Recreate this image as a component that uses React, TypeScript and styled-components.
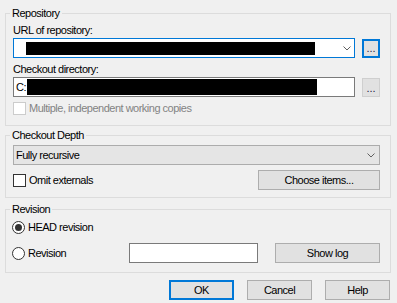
import styled, { createGlobalStyle } from "styled-components";

const GlobalStyle = createGlobalStyle`
  html, body {
    margin: 0;
    background: #f0f0f0;
  }
  body {
    font-family: "Liberation Sans", Arial, sans-serif;
    font-size: 11px;
    letter-spacing: -0.5px;
    color: #000;
  }
`;

const Chevron = () => (
  <svg width="8" height="5" viewBox="0 0 8 5">
    <path d="M0.5 0.5 L4 4 L7.5 0.5" fill="none" stroke="#606060" strokeWidth="1" />
  </svg>
);

const App = () => {
  return (
    <>
      <GlobalStyle />
      <Dialog>
        <Group $pt={4} $pb={10}>
          <Legend>Repository</Legend>
          <Label>URL of repository:</Label>
          <FieldRow>
            <Field $focused>
              <Redacted $left={11} $width={289} $height={13} />
              <ChevronBox $right={3}>
                <Chevron />
              </ChevronBox>
            </Field>
            <BrowseButton $focused>...</BrowseButton>
          </FieldRow>
          <Label $mt={5}>Checkout directory:</Label>
          <FieldRow>
            <Field>
              <FieldText>C:</FieldText>
              <Redacted $left={1} $width={290} $height={16} />
            </Field>
            <BrowseButton>...</BrowseButton>
          </FieldRow>
          <CheckRow $mt={5} $disabled>
            <CheckBox $disabled />
            Multiple, independent working copies
          </CheckRow>
        </Group>

        <Group $mt={3} $pt={3} $pb={7}>
          <Legend>Checkout Depth</Legend>
          <Select>
            Fully recursive
            <ChevronBox $right={4}>
              <Chevron />
            </ChevronBox>
          </Select>
          <OptionRow>
            <CheckRow>
              <CheckBox />
              Omit externals
            </CheckRow>
            <PushButton $w={122}>Choose items...</PushButton>
          </OptionRow>
        </Group>

        <Group $mt={5} $pt={5} $pb={9}>
          <Legend>Revision</Legend>
          <CheckRow>
            <Radio $checked />
            HEAD revision
          </CheckRow>
          <RevisionGrid>
            <CheckRow>
              <Radio />
              Revision
            </CheckRow>
            <TextBox />
            <PushButton>Show log</PushButton>
          </RevisionGrid>
        </Group>

        <ButtonBar>
          <PushButton $w={65} $focused>
            OK
          </PushButton>
          <PushButton $w={65}>Cancel</PushButton>
          <PushButton $w={65}>Help</PushButton>
        </ButtonBar>
      </Dialog>
    </>
  );
};

const Dialog = styled.div`
  width: 397px;
  height: 303px;
  box-sizing: border-box;
  padding: 7px 6px 0 5px;
  display: flex;
  flex-direction: column;
`;

const Group = styled.fieldset<{ $mt?: number; $pt: number; $pb: number }>`
  margin: ${(p) => p.$mt ?? 0}px 0 0;
  padding: ${(p) => p.$pt}px 10px ${(p) => p.$pb}px 7px;
  border: 1px solid #dcdcdc;
  min-inline-size: 0;
  display: flex;
  flex-direction: column;
`;

const Legend = styled.legend`
  padding: 0 2px;
  margin-left: -3px;
  line-height: 13px;
`;

const Label = styled.div<{ $mt?: number }>`
  line-height: 13px;
  margin-top: ${(p) => p.$mt ?? 0}px;
`;

const FieldRow = styled.div`
  display: flex;
  align-items: flex-start;
  gap: 7px;
  margin-top: 1px;
`;

const Field = styled.div<{ $focused?: boolean }>`
  flex: 1;
  height: 20px;
  box-sizing: border-box;
  display: flex;
  align-items: center;
  padding-left: 1px;
  background: #fff;
  border: 1px solid ${(p) => (p.$focused ? "#0078d7" : "#7a7a7a")};
`;

const FieldText = styled.span`
  padding-left: 1px;
`;

const Redacted = styled.span<{ $left: number; $width: number; $height: number }>`
  display: inline-block;
  margin-left: ${(p) => p.$left}px;
  width: ${(p) => p.$width}px;
  height: ${(p) => p.$height}px;
  background: #000;
`;

const ChevronBox = styled.span<{ $right: number }>`
  display: flex;
  margin-left: auto;
  margin-right: ${(p) => p.$right}px;
`;

const BrowseButton = styled.button<{ $focused?: boolean }>`
  width: 18px;
  height: 19px;
  margin-top: 1px;
  padding: 0 0 2px;
  box-sizing: border-box;
  font: inherit;
  letter-spacing: 0;
  line-height: 1;
  display: flex;
  align-items: flex-end;
  justify-content: center;
  color: #1a1a40;
  background: #e1e1e1;
  border: ${(p) => (p.$focused ? "2px solid #0078d7" : "1px solid #cfcfcf")};
`;

const CheckRow = styled.label<{ $mt?: number; $disabled?: boolean }>`
  display: flex;
  align-items: center;
  gap: 3px;
  line-height: 13px;
  margin-top: ${(p) => p.$mt ?? 0}px;
  color: ${(p) => (p.$disabled ? "#838383" : "#000")};
`;

const CheckBox = styled.span<{ $disabled?: boolean }>`
  width: 13px;
  height: 13px;
  box-sizing: border-box;
  background: #fff;
  border: 1px solid ${(p) => (p.$disabled ? "#cccccc" : "#333333")};
`;

const Radio = styled.span<{ $checked?: boolean }>`
  width: 13px;
  height: 13px;
  margin-left: -1px;
  box-sizing: border-box;
  border-radius: 50%;
  background: #fff;
  border: 1px solid #333;
  display: flex;
  align-items: center;
  justify-content: center;

  &::after {
    content: "";
    width: 7px;
    height: 7px;
    border-radius: 50%;
    background: ${(p) => (p.$checked ? "#333" : "transparent")};
  }
`;

const Select = styled.div`
  height: 20px;
  box-sizing: border-box;
  display: flex;
  align-items: center;
  padding-left: 2px;
  background: #e5e5e5;
  border: 1px solid #acacac;
`;

const OptionRow = styled.div`
  display: flex;
  align-items: center;
  justify-content: space-between;
  margin-top: 5px;
`;

const PushButton = styled.button<{ $w?: number; $focused?: boolean }>`
  width: ${(p) => (p.$w ? `${p.$w}px` : "auto")};
  height: 20px;
  padding: 0;
  box-sizing: border-box;
  font: inherit;
  letter-spacing: inherit;
  color: #000;
  background: #e1e1e1;
  border: ${(p) => (p.$focused ? "2px solid #0078d7" : "1px solid #adadad")};
`;

const RevisionGrid = styled.div`
  display: grid;
  grid-template-columns: 1fr 129px 105px;
  column-gap: 17px;
  align-items: center;
  margin-top: 9px;
  height: 20px;
`;

const TextBox = styled.div`
  height: 20px;
  box-sizing: border-box;
  background: #fff;
  border: 1px solid #7a7a7a;
`;

const ButtonBar = styled.div`
  display: flex;
  justify-content: flex-end;
  gap: 13px;
  margin-top: 7px;
  padding-right: 1px;
`;

export default App;
